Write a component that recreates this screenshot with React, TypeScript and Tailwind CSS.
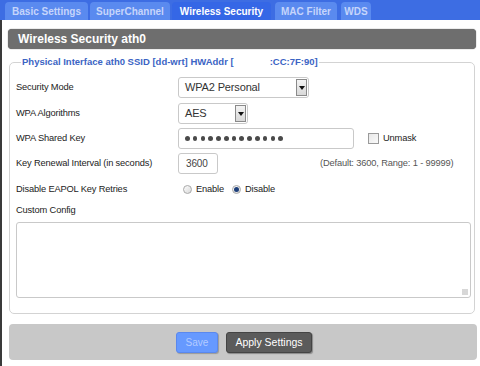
import React from "react";

function SelectBox({ width, value }: { width: number; value: string }) {
  return (
    <div
      className="h-[21px] flex items-center rounded-[3px] border border-[#c9c9c9] bg-white pl-[6px] pr-[1px]"
      style={{ width }}
    >
      <span className="flex-1 text-[11px] text-[#333] leading-none">{value}</span>
      <div className="w-[11px] h-[17px] border border-[#8a8a8a] bg-gradient-to-b from-[#f4f4f4] to-[#d8d8d8] flex items-center justify-center">
        <div className="w-0 h-0 border-l-[3px] border-r-[3px] border-t-[4px] border-l-transparent border-r-transparent border-t-[#111]" />
      </div>
    </div>
  );
}

function Radio({ checked }: { checked?: boolean }) {
  return (
    <div className="w-[9px] h-[9px] rounded-full border border-[#a9a9a9] bg-gradient-to-br from-[#fdfdfd] to-[#d9d9d9] flex items-center justify-center">
      {checked && <div className="w-[5px] h-[5px] rounded-full bg-[#1d3f7a]" />}
    </div>
  );
}

export default function App() {
  const tabs = [
    { label: "Basic Settings", w: 83, ml: 5 },
    { label: "SuperChannel", w: 80, ml: 2 },
    { label: "Wireless Security", w: 99, ml: 2, active: true },
    { label: "MAC Filter", w: 62, ml: 4 },
    { label: "WDS", w: 30, ml: 4 },
  ];
  const dots = Array.from({ length: 13 }, (_, i) => i);
  return (
    <div className="w-[480px] h-[366px] bg-white overflow-hidden flex flex-col font-['Liberation_Sans',Arial,sans-serif]">
      <div className="h-[20px] bg-[#3d6de3] flex items-end shrink-0">
        {tabs.map((t) => (
          <div
            key={t.label}
            className={
              t.active
                ? "h-[18px] rounded-t-[4px] bg-[#3567e6] text-white font-bold text-[10px] flex items-center justify-center"
                : "h-[18px] rounded-t-[4px] bg-[#5a8aef] text-[#c6d5fb] font-bold text-[10px] flex items-center justify-center"
            }
            style={{ width: t.w, marginLeft: t.ml }}
          >
            {t.label}
          </div>
        ))}
      </div>
      <div className="flex-1 border-l-2 border-[#3a3a3a] pl-[6px] pr-[3px] flex flex-col">
        <div className="mt-[9px] mr-[1px] h-[20px] rounded-[4px] bg-[#6e6e6e] shadow-[0_0_1px_#444] pl-[10px] flex items-center text-white font-bold text-[12px]">
          Wireless Security ath0
        </div>
        <fieldset className="mt-[7px] ml-[1px] mr-[2px] border border-[#d3d3d3] rounded-[5px] pl-[6px] pr-[3px] pb-[15px]">
          <legend className="ml-[5px] px-[1px] h-[12px] text-[9.5px] font-bold text-[#3b64c4] leading-[12px]">
            Physical Interface ath0 SSID [dd-wrt] HWAddr [<span className="inline-block w-[36px]" />:CC:7F:90]
          </legend>
          <div className="flex flex-col text-[9.3px] text-[#222] tracking-[-0.15px]">
            <div className="mt-[9px] h-[21px] flex items-center">
              <div className="w-[162px]">Security Mode</div>
              <SelectBox width={131} value="WPA2 Personal" />
            </div>
            <div className="mt-[5px] h-[21px] flex items-center">
              <div className="w-[162px]">WPA Algorithms</div>
              <SelectBox width={70} value="AES" />
            </div>
            <div className="mt-[4px] h-[21px] flex items-center">
              <div className="w-[162px]">WPA Shared Key</div>
              <div className="w-[176px] h-[21px] rounded-[3px] border border-[#c9c9c9] bg-white pl-[6px] flex items-center gap-[3.2px]">
                {dots.map((d) => (
                  <div key={d} className="w-[4.6px] h-[4.6px] rounded-full bg-[#4a4a4a]" />
                ))}
              </div>
              <div className="ml-[14px] w-[11px] h-[11px] border border-[#9a9a9a] bg-gradient-to-br from-[#e8e8e8] to-[#fafafa]" />
              <div className="ml-[4px]">Unmask</div>
            </div>
            <div className="mt-[4px] h-[21px] flex items-center">
              <div className="w-[162px]">Key Renewal Interval (in seconds)</div>
              <div className="w-[40px] h-[21px] rounded-[3px] border border-[#c9c9c9] bg-white pl-[7px] flex items-center text-[#444] text-[10px]">
                3600
              </div>
              <div className="ml-[102px] text-[#555]">(Default: 3600, Range: 1 - 99999)</div>
            </div>
            <div className="mt-[5px] h-[21px] flex items-center">
              <div className="w-[167px]">Disable EAPOL Key Retries</div>
              <Radio />
              <div className="ml-[4px] w-[36px]">Enable</div>
              <Radio checked />
              <div className="ml-[4px]">Disable</div>
            </div>
            <div className="mt-[4px] h-[14px] flex items-center">Custom Config</div>
            <div className="mt-[4px] h-[76px] rounded-[3px] border border-[#c9c9c9] bg-white relative">
              <div className="absolute right-[2px] bottom-[2px] w-[6px] h-[6px] bg-[radial-gradient(circle,#aaa_0.6px,transparent_0.8px)] bg-[length:2px_2px]" />
            </div>
          </div>
        </fieldset>
        <div className="mt-[10px] ml-[1px] h-[36px] rounded-[4px] bg-[#c8c8c8] flex justify-center gap-[8px] pt-[8px] pl-[2px]">
          <div className="w-[42px] h-[21px] rounded-[3px] bg-[#6699ff] border border-[#5a88ee] shadow-[1px_1px_1px_#999] flex items-center justify-center text-[10px] text-[#b3cbff]">
            Save
          </div>
          <div className="w-[86px] h-[21px] rounded-[3px] bg-[#5b5b5b] border border-[#444] shadow-[1px_1px_1px_#888] flex items-center justify-center text-[10.5px] text-white">
            Apply Settings
          </div>
        </div>
      </div>
    </div>
  );
}
